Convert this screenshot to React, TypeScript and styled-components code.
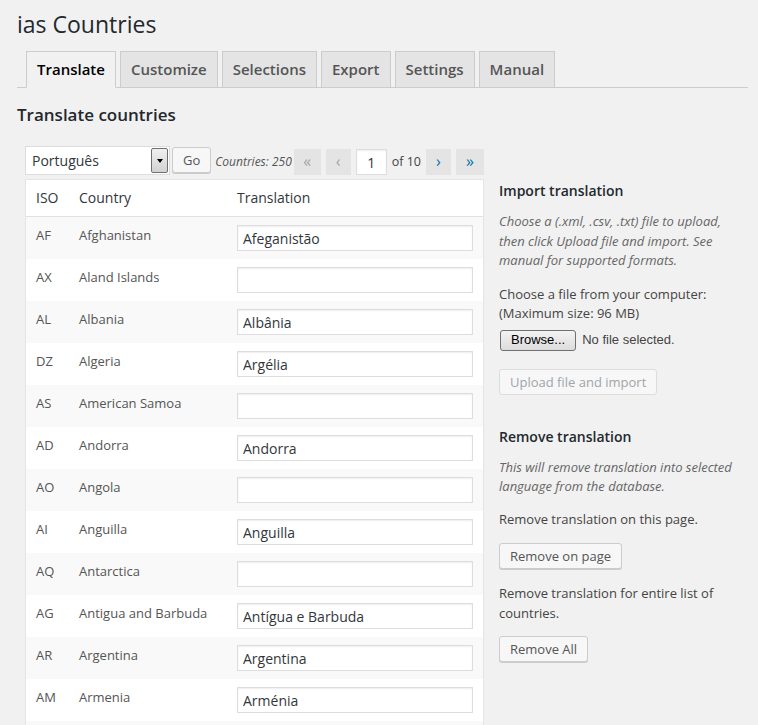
import React from "react";
import styled, { createGlobalStyle } from "styled-components";

const GlobalStyle = createGlobalStyle`
  html, body { margin: 0; padding: 0; background: #f1f1f1; }
  body {
    font-family: "Open Sans", "Noto Sans", sans-serif;
    font-size: 13px;
    line-height: 1.5;
    color: #444;
  }
  * { box-sizing: border-box; }
`;

const Wrap = styled.div`
  padding: 10px 10px 0 17px;
`;

const Title = styled.h1`
  margin: 0;
  font-size: 23px;
  font-weight: 400;
  line-height: 29px;
  color: #23282d;
`;

const TabBar = styled.nav`
  display: flex;
  align-items: flex-end;
  gap: 4px;
  margin-top: 12px;
  padding-left: 9px;
  border-bottom: 1px solid #ccc;
`;

const Tab = styled.a<{ $active?: boolean }>`
  display: block;
  margin-bottom: -1px;
  padding: 5px 10px 6px;
  font-size: 15px;
  font-weight: 600;
  line-height: 24px;
  white-space: nowrap;
  border: 1px solid #ccc;
  border-bottom-color: ${(p) => (p.$active ? "#f1f1f1" : "#ccc")};
  background: ${(p) => (p.$active ? "#f1f1f1" : "#e4e4e4")};
  color: ${(p) => (p.$active ? "#000" : "#555")};
  text-decoration: none;
`;

const SectionTitle = styled.h2`
  margin: 17px 0 0;
  font-size: 17px;
  font-weight: 600;
  line-height: 20px;
  color: #23282d;
`;

const Columns = styled.div`
  display: flex;
  align-items: flex-start;
  margin-top: 21px;
  padding-left: 8px;
`;

const LeftCol = styled.div`
  width: 459px;
  flex: none;
`;

const RightCol = styled.aside`
  flex: 1;
  margin-left: 15px;
  padding-top: 34px;
`;

const Toolbar = styled.div`
  display: flex;
  align-items: center;
  height: 29px;
  white-space: nowrap;
`;

const SelectBox = styled.div`
  display: flex;
  flex: none;
  align-items: center;
  width: 145px;
  height: 29px;
  padding: 0 1px 0 6px;
  background: #fff;
  border: 1px solid #ddd;
  font-size: 14px;
  color: #32373c;
`;

const SelectText = styled.span`
  flex: 1;
`;

const SelectArrow = styled.span`
  display: flex;
  align-items: center;
  justify-content: center;
  width: 17px;
  height: 25px;
  border: 1px solid #707070;
  border-radius: 2px;
  background: linear-gradient(#f0f0f0, #d2d2d2);
  &::after {
    content: "";
    width: 0;
    height: 0;
    border-left: 3.5px solid transparent;
    border-right: 3.5px solid transparent;
    border-top: 4px solid #000;
  }
`;

const Button = styled.button<{ $disabled?: boolean }>`
  display: flex;
  flex: none;
  align-items: center;
  width: fit-content;
  height: 26px;
  margin: 0;
  padding: 0 10px;
  font-family: "Open Sans", "Noto Sans", sans-serif;
  font-size: 13px;
  line-height: 24px;
  white-space: nowrap;
  background: #f7f7f7;
  border: 1px solid ${(p) => (p.$disabled ? "#ddd" : "#ccc")};
  border-radius: 3px;
  box-shadow: ${(p) => (p.$disabled ? "none" : "0 1px 0 #ccc")};
  color: ${(p) => (p.$disabled ? "#a0a5aa" : "#555")};
  cursor: ${(p) => (p.$disabled ? "default" : "pointer")};
`;

const GoButton = styled(Button)`
  margin-left: 2px;
  align-self: flex-start;
  margin-top: 1px;
`;

const CountText = styled.span`
  flex: none;
  margin-left: 4px;
  padding-top: 2px;
  font-size: 12px;
  font-style: italic;
  color: #555;
`;

const Pager = styled.div`
  display: flex;
  flex: none;
  align-items: center;
  gap: 5px;
  margin-left: auto;
  align-self: flex-end;
`;

const PageButton = styled.span<{ $enabled?: boolean; $w: number }>`
  display: flex;
  align-items: center;
  justify-content: center;
  width: ${(p) => p.$w}px;
  height: 26px;
  padding-bottom: 3px;
  background: #e4e4e4;
  font-size: 16px;
  color: ${(p) => (p.$enabled ? "#0073aa" : "#a0a5aa")};
`;

const PageInput = styled.span`
  display: flex;
  align-items: center;
  justify-content: center;
  width: 31px;
  height: 26px;
  background: #fff;
  border: 1px solid #ddd;
  box-shadow: inset 0 1px 2px rgba(0, 0, 0, 0.07);
  font-size: 14px;
  color: #32373c;
`;

const PageOf = styled.span`
  font-size: 12.5px;
  color: #444;
`;

const Table = styled.table`
  margin-top: 4px;
  width: 100%;
  table-layout: fixed;
  border-spacing: 0;
  background: #fff;
  border: 1px solid #e5e5e5;
  box-shadow: 0 1px 1px rgba(0, 0, 0, 0.04);
`;

const Th = styled.th<{ $w?: number }>`
  ${(p) => (p.$w ? `width: ${p.$w}px;` : "")}
  padding: 8px 10px;
  text-align: left;
  font-size: 14px;
  font-weight: 400;
  line-height: 20px;
  color: #32373c;
  border-bottom: 1px solid #e1e1e1;
`;

const Tr = styled.tr`
  &:nth-child(odd) {
    background: #f9f9f9;
  }
`;

const Td = styled.td`
  padding: 8px 10px;
  vertical-align: top;
  font-size: 13px;
  line-height: 20px;
  color: #555;
`;

const TextInput = styled.input`
  display: block;
  width: 100%;
  height: 26px;
  margin: 0;
  padding: 2px 5px;
  background: #fff;
  border: 1px solid #ddd;
  border-radius: 0;
  box-shadow: inset 0 1px 2px rgba(0, 0, 0, 0.07);
  font-family: "Open Sans", "Noto Sans", sans-serif;
  font-size: 14px;
  color: #32373c;
  outline: none;
`;

const SideHeading = styled.h3<{ $mt?: number }>`
  margin: ${(p) => p.$mt ?? 0}px 0 0;
  font-size: 14px;
  font-weight: 600;
  line-height: 21px;
  color: #23282d;
`;

const Para = styled.p<{ $mt: number; $note?: boolean }>`
  margin: ${(p) => p.$mt}px 0 0;
  line-height: 19.5px;
  font-style: ${(p) => (p.$note ? "italic" : "normal")};
  color: ${(p) => (p.$note ? "#666" : "#444")};
`;

const FileRow = styled.div`
  display: flex;
  align-items: center;
  gap: 6px;
  margin-top: 6px;
  margin-left: 1px;
`;

const BrowseButton = styled.span`
  display: flex;
  align-items: center;
  height: 21px;
  padding: 0 10px;
  border: 1px solid #707070;
  border-radius: 3px;
  background: linear-gradient(#f3f3f3, #dcdcdc);
  font-family: "Liberation Sans", Arial, sans-serif;
  font-size: 13px;
  color: #000;
`;

const NoFile = styled.span`
  font-family: "Liberation Sans", Arial, sans-serif;
  font-size: 13px;
  color: #444;
`;

const Spaced = styled.div<{ $mt: number }>`
  margin-top: ${(p) => p.$mt}px;
`;

const tabs = ["Translate", "Customize", "Selections", "Export", "Settings", "Manual"];

const rows: [string, string, string][] = [
  ["AF", "Afghanistan", "Afeganistão"],
  ["AX", "Aland Islands", ""],
  ["AL", "Albania", "Albânia"],
  ["DZ", "Algeria", "Argélia"],
  ["AS", "American Samoa", ""],
  ["AD", "Andorra", "Andorra"],
  ["AO", "Angola", ""],
  ["AI", "Anguilla", "Anguilla"],
  ["AQ", "Antarctica", ""],
  ["AG", "Antigua and Barbuda", "Antígua e Barbuda"],
  ["AR", "Argentina", "Argentina"],
  ["AM", "Armenia", "Arménia"],
  ["AW", "Aruba", "Aruba"],
  ["AU", "Australia", "Austrália"],
];

export default function App() {
  return (
    <>
      <GlobalStyle />
      <Wrap>
        <Title>ias Countries</Title>
        <TabBar>
          {tabs.map((t, i) => (
            <Tab key={t} $active={i === 0}>
              {t}
            </Tab>
          ))}
        </TabBar>
        <SectionTitle>Translate countries</SectionTitle>
        <Columns>
          <LeftCol>
            <Toolbar>
              <SelectBox>
                <SelectText>Português</SelectText>
                <SelectArrow />
              </SelectBox>
              <GoButton>Go</GoButton>
              <CountText>Countries: 250</CountText>
              <Pager>
                <PageButton $w={27}>«</PageButton>
                <PageButton $w={25}>‹</PageButton>
                <PageInput>1</PageInput>
                <PageOf>of 10</PageOf>
                <PageButton $w={25} $enabled>
                  ›
                </PageButton>
                <PageButton $w={28} $enabled>
                  »
                </PageButton>
              </Pager>
            </Toolbar>
            <Table>
              <thead>
                <tr>
                  <Th $w={43}>ISO</Th>
                  <Th $w={158}>Country</Th>
                  <Th>Translation</Th>
                </tr>
              </thead>
              <tbody>
                {rows.map(([iso, name, tr]) => (
                  <Tr key={iso}>
                    <Td>{iso}</Td>
                    <Td>{name}</Td>
                    <Td>
                      <TextInput value={tr} readOnly />
                    </Td>
                  </Tr>
                ))}
              </tbody>
            </Table>
          </LeftCol>
          <RightCol>
            <SideHeading>Import translation</SideHeading>
            <Para $mt={11} $note>
              Choose a (.xml, .csv, .txt) file to upload, then click Upload file and import. See
              manual for supported formats.
            </Para>
            <Para $mt={14}>
              Choose a file from your computer:
              <br />
              (Maximum size: 96 MB)
            </Para>
            <FileRow>
              <BrowseButton>Browse...</BrowseButton>
              <NoFile>No file selected.</NoFile>
            </FileRow>
            <Spaced $mt={18}>
              <Button $disabled>Upload file and import</Button>
            </Spaced>
            <SideHeading $mt={31}>Remove translation</SideHeading>
            <Para $mt={11} $note>
              This will remove translation into selected language from the database.
            </Para>
            <Para $mt={13}>Remove translation on this page.</Para>
            <Spaced $mt={14}>
              <Button>Remove on page</Button>
            </Spaced>
            <Para $mt={15}>Remove translation for entire list of countries.</Para>
            <Spaced $mt={13}>
              <Button>Remove All</Button>
            </Spaced>
          </RightCol>
        </Columns>
      </Wrap>
    </>
  );
}
